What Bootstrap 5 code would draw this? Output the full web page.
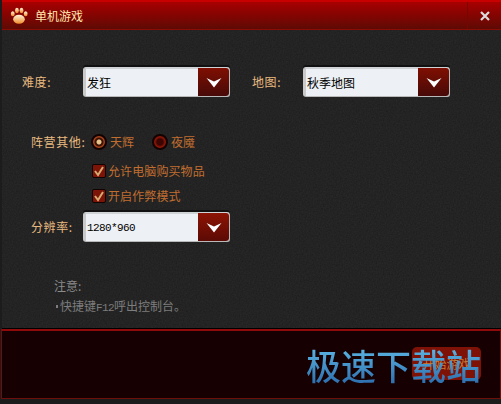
<!DOCTYPE html>
<html lang="zh"><head><meta charset="utf-8">
<link href="https://cdn.jsdelivr.net/npm/bootstrap@5.3.0/dist/css/bootstrap.min.css" rel="stylesheet">
<style>
html,body{margin:0;background:#1a1a1a;}
body{font:12px/16px "Noto Sans CJK SC",sans-serif;overflow:hidden;}
.gwin{width:501px;height:404px;position:relative;background:#1c1c1c;padding-left:2px;}
.gtitle{height:30px;border-top:2px solid #c80000;background:linear-gradient(#a80000,#5e0a04);border-bottom:1px solid #8a0d05;color:#ffe6ae;font-size:12px;box-shadow:0 -2px 0 #000;}
.gpaw{margin:0 6px 0 7px;}
.gclose{width:34px;height:27px;border-left:1px solid #7a0500;}
.gbody{height:299px;border-bottom:1px solid #000;background-color:#2b2b2b;background-image:url("data:image/svg+xml,%3Csvg xmlns='http://www.w3.org/2000/svg' width='200' height='200'%3E%3Cfilter id='n'%3E%3CfeTurbulence type='fractalNoise' baseFrequency='.7' numOctaves='2'/%3E%3CfeColorMatrix values='0 0 0 0 0 0 0 0 0 0 0 0 0 0 0 0 0 0 .35 0'/%3E%3C/filter%3E%3Crect width='200' height='200' filter='url(%23n)'/%3E%3C/svg%3E");}
.grow1{padding:37px 0 0 20px;}
.glabel{color:#e9bb80;font-size:12px;letter-spacing:.6px;}
.l1{width:61px;}.l2{width:51px;margin-left:22px;}
.gsel{width:147px;height:30px;background:#edf0f4;border:1px solid #b9b9b9;border-left:3px solid #c9c9c9;border-top:2px solid #d0d3d6;border-radius:3px;color:#000;box-shadow:0 -2px 0 #111;padding-left:1px;font-size:12px;}
.garrow{width:31px;height:28px;margin-top:-1px;background:linear-gradient(#7f0f02,#470a08);border-radius:0 3px 3px 0;}
.garrow2{background:linear-gradient(#8c1404,#5c0a05);}
.gradios{padding:37px 0 0 29px;}
.l3{width:60px;}
.gopt{color:#c06e30;letter-spacing:.1px;}
.gr{width:16px;height:16px;border-radius:50%;border:2px solid #120302;margin-right:3px;}
.gr-on{background:radial-gradient(circle,#e8c48c 0 2px,#3a1206 3px,#3a1206 4px,#a8431c 5px);}
.gr-off{background:radial-gradient(circle,#3a0502 0 3px,#8a1608 5px);}
.gw1{width:42px;}
.gchk{padding-left:90px;height:25px;}
.gb{width:14px;height:14px;background:#7c1408;border:1px solid #100302;border-radius:2px;margin-right:2px;}
.gchecks{padding-top:8px;}
.grow3{padding:4px 0 0 29px;}
.gw3{width:52px;}
.gmono{font:11px/16px "Liberation Mono",monospace;letter-spacing:-.6px;}
.gmono2{letter-spacing:-.6px;font-family:"Liberation Mono",monospace;font-size:11px;}
.gdot{display:inline-block;width:2px;height:3px;background:#7d7d7d;margin:0 2px 3px 2px;}
.gnote{padding:34px 0 0 52px;color:#7d7d7d;line-height:20px;}
.gnote1{color:#8b8b8b;}
.gfoot{height:70px;margin-left:-1px;background:#170002;border:1px solid #6d0f0a;border-top:2px solid #8f0b0b;}
.gstart{position:absolute;left:412px;top:347px;width:69px;height:33px;background:#7f1206;border-radius:5px;color:#c77b35;font-size:12px;}
.gwater{position:absolute;left:306px;top:342px;font:500 35px/46px "Noto Sans CJK SC",sans-serif;white-space:nowrap;background:linear-gradient(#62c0ec,#2866a8);-webkit-background-clip:text;background-clip:text;color:transparent;}
</style></head><body>
<div class="gwin">
  <div class="gtitle d-flex align-items-center">
    <svg width="20" height="19" viewBox="0 0 24 22" class="gpaw"><defs><linearGradient id="p" x1="0" y1="0" x2="0" y2="1"><stop offset="0" stop-color="#fff6d8"/><stop offset="1" stop-color="#f08a28"/></linearGradient></defs><g fill="url(#p)"><ellipse cx="12" cy="15.500" rx="7" ry="5.500"/><ellipse cx="4.500" cy="9" rx="2.300" ry="3"/><ellipse cx="9.500" cy="5" rx="2.300" ry="3.200"/><ellipse cx="15" cy="5" rx="2.300" ry="3.200"/><ellipse cx="20" cy="9" rx="2.300" ry="3"/></g></svg>
    <span class="flex-grow-1">单机游戏</span>
    <div class="gclose d-flex align-items-center justify-content-center"><svg width="10" height="10" viewBox="0 0 10 10"><path d="M1 1L9 9M9 1L1 9" stroke="#ddd" stroke-width="2.200"/></svg></div>
  </div>
  <div class="gbody">
    <div class="grow1 d-flex align-items-center">
      <span class="glabel l1">难度:</span>
      <div class="gsel d-flex align-items-center justify-content-between"><span>发狂</span><span class="garrow d-flex align-items-center justify-content-center"><svg width="16" height="11" viewBox="0 0 16 11"><path d="M0.500 1L8 4.500L15.500 1L8 10.500Z" fill="#fff"/></svg></span></div>
      <span class="glabel l2">地图:</span>
      <div class="gsel d-flex align-items-center justify-content-between"><span>秋季地图</span><span class="garrow d-flex align-items-center justify-content-center"><svg width="16" height="11" viewBox="0 0 16 11"><path d="M0.500 1L8 4.500L15.500 1L8 10.500Z" fill="#fff"/></svg></span></div>
    </div>
    <div class="gradios d-flex align-items-center">
      <span class="glabel l3">阵营其他:</span>
      <span class="gr gr-on"></span><span class="gopt gw1">天辉</span>
      <span class="gr gr-off"></span><span class="gopt">夜魇</span>
    </div>
    <div class="gchecks">
      <div class="gchk d-flex align-items-center"><span class="gb d-flex align-items-center justify-content-center"><svg width="12" height="12" viewBox="0 0 12 12"><path d="M2 6L5 10L10 2" fill="none" stroke="#d8aa70" stroke-width="2"/></svg></span><span class="gopt">允许电脑购买物品</span></div>
      <div class="gchk d-flex align-items-center"><span class="gb d-flex align-items-center justify-content-center"><svg width="12" height="12" viewBox="0 0 12 12"><path d="M2 6L5 10L10 2" fill="none" stroke="#d8aa70" stroke-width="2"/></svg></span><span class="gopt">开启作弊模式</span></div>
    </div>
    <div class="grow3 d-flex align-items-center">
      <span class="glabel gw3">分辨率:</span>
      <div class="gsel d-flex align-items-center justify-content-between"><span class="gmono">1280*960</span><span class="garrow garrow2 d-flex align-items-center justify-content-center"><svg width="16" height="11" viewBox="0 0 16 11"><path d="M0.500 1L8 4.500L15.500 1L8 10.500Z" fill="#fff"/></svg></span></div>
    </div>
    <div class="gnote"><div class="gnote1">注意:</div><div><span class="gdot"></span>快捷键<span class="gmono2">F12</span>呼出控制台。</div></div>
  </div>
  <div class="gfoot"></div>
  <div class="gstart d-flex align-items-center justify-content-center">开始游戏</div>
  <div class="gwater">极速下载站</div>
</div>
<script src="https://cdn.jsdelivr.net/npm/bootstrap@5.3.0/dist/js/bootstrap.bundle.min.js"></script>
</body></html>
